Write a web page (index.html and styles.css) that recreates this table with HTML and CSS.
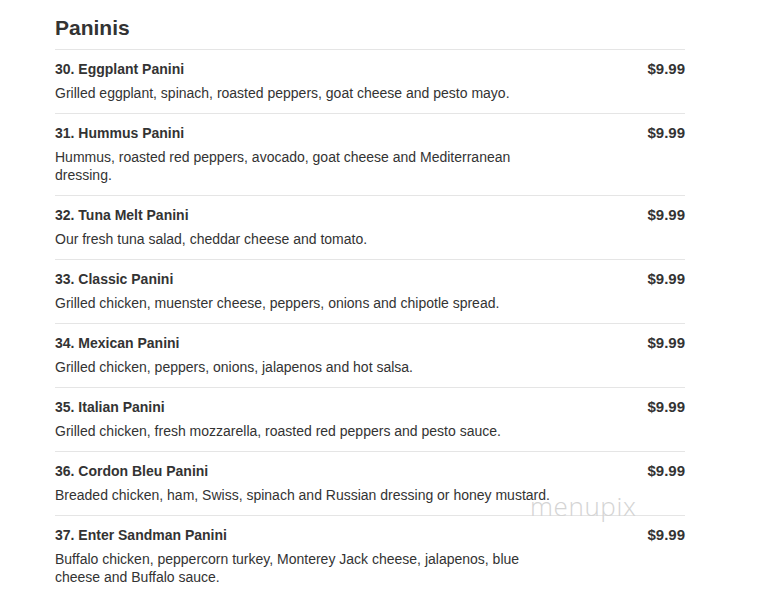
FILE: index.html
```html
<!DOCTYPE html>
<html>
<head>
<meta charset="utf-8">
<link rel="stylesheet" href="styles.css">
</head>
<body>
<div class="menu">
  <h2 class="title">Paninis</h2>
  <div class="item">
    <div class="info"><div class="name">30. Eggplant Panini</div><div class="desc">Grilled eggplant, spinach, roasted peppers, goat cheese and pesto mayo.</div></div>
    <div class="price">$9.99</div>
  </div>
  <div class="item">
    <div class="info"><div class="name">31. Hummus Panini</div><div class="desc">Hummus, roasted red peppers, avocado, goat cheese and Mediterranean dressing.</div></div>
    <div class="price">$9.99</div>
  </div>
  <div class="item">
    <div class="info"><div class="name">32. Tuna Melt Panini</div><div class="desc">Our fresh tuna salad, cheddar cheese and tomato.</div></div>
    <div class="price">$9.99</div>
  </div>
  <div class="item">
    <div class="info"><div class="name">33. Classic Panini</div><div class="desc">Grilled chicken, muenster cheese, peppers, onions and chipotle spread.</div></div>
    <div class="price">$9.99</div>
  </div>
  <div class="item">
    <div class="info"><div class="name">34. Mexican Panini</div><div class="desc">Grilled chicken, peppers, onions, jalapenos and hot salsa.</div></div>
    <div class="price">$9.99</div>
  </div>
  <div class="item">
    <div class="info"><div class="name">35. Italian Panini</div><div class="desc">Grilled chicken, fresh mozzarella, roasted red peppers and pesto sauce.</div></div>
    <div class="price">$9.99</div>
  </div>
  <div class="item">
    <div class="info"><div class="name">36. Cordon Bleu Panini</div><div class="desc">Breaded chicken, ham, Swiss, spinach and Russian dressing or honey mustard.</div></div>
    <div class="price">$9.99</div>
  </div>
  <div class="item">
    <div class="info"><div class="name">37. Enter Sandman Panini</div><div class="desc">Buffalo chicken, peppercorn turkey, Monterey Jack cheese, jalapenos, blue cheese and Buffalo sauce.</div></div>
    <div class="price">$9.99</div>
  </div>
  <div class="watermark">menupix</div>
</div>
</body>
</html>
```
FILE: styles.css
```css
html, body { margin: 0; padding: 0; background: #fff; }
body { font-family: "Liberation Sans", Arial, sans-serif; color: #333; }
.menu { position: relative; width: 630px; margin-left: 55px; padding-top: 16px; }
.title { margin: 0 0 9px; font-size: 21px; line-height: 24px; font-weight: bold; color: #333; }
.item { display: flex; justify-content: space-between; align-items: flex-start; border-top: 1px solid #e5e5e5; padding: 10px 0 11px; }
.info { width: 500px; }
.name { font-size: 14px; line-height: 18px; font-weight: bold; margin-bottom: 6px; }
.desc { font-size: 14px; line-height: 18px; }
.price { font-size: 15px; line-height: 18px; font-weight: bold; }
.watermark { position: absolute; left: 475px; top: 488px; font-family: "Open Sans", sans-serif; font-weight: 300; font-size: 26px; color: #d4d4d4; letter-spacing: 0.6px; }
```
